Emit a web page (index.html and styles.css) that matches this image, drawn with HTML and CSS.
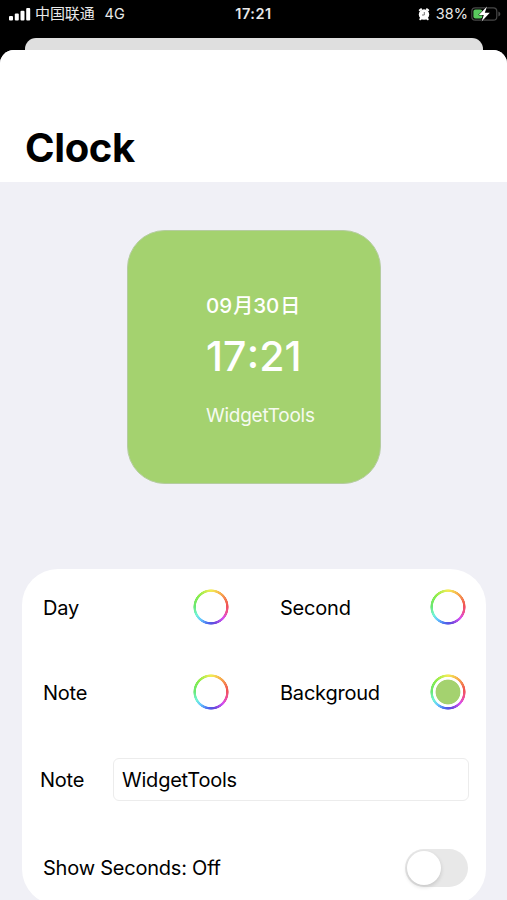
FILE: index.html
```html
<!DOCTYPE html>
<html lang="zh-CN">
<head>
<meta charset="utf-8">
<title>Clock</title>
<link rel="stylesheet" href="styles.css">
</head>
<body>
<header class="status">
  <div class="status-left">
    <svg class="signal" width="22" height="14" viewBox="0 0 22 14" fill="#fff"><rect x="0" y="9" width="4" height="4.5" rx="1"/><rect x="5.8" y="6.5" width="4" height="7" rx="1"/><rect x="11.5" y="3.8" width="4" height="9.7" rx="1"/><rect x="17.2" y="1" width="4" height="12.5" rx="1"/></svg>
    <span class="carrier">中国联通</span>
    <span class="network">4G</span>
  </div>
  <span class="status-time">17:21</span>
  <div class="status-right">
    <svg class="alarm" width="12" height="13" viewBox="0 0 12 13"><path d="M1.8 2.2 3 1.2M10.2 2.2 9 1.2M2.3 11.3l1-1M9.7 11.3l-1-1" stroke="#fff" stroke-width="2" stroke-linecap="round"/><circle cx="6" cy="6.5" r="5.2" fill="#fff"/><path d="M6.3 4v3H4" fill="none" stroke="#777" stroke-width="1"/></svg>
    <span class="percent">38%</span>
    <svg class="battery" width="30" height="16" viewBox="0 0 30 16"><rect x=".8" y="1.8" width="25" height="12.4" rx="3.5" fill="none" stroke="#484848" stroke-width="1.2"/><path d="M27.4 5.5q2 .8 2 2.5t-2 2.5z" fill="#484848"/><rect x="2.4" y="3.4" width="9" height="9.2" rx="2" fill="#59c95e"/><path d="M16 .6 7.8 8.9h5l-2.2 6.7 8.2-8.9h-5z" fill="#fff" stroke="#000" stroke-width="1" paint-order="stroke"/></svg>
  </div>
</header>
<div class="sheet-back"></div>
<main class="sheet">
  <div class="title-bar"><h1>Clock</h1></div>
  <section class="widget">
    <div class="widget-date">09<span class="cjk">月</span>30<span class="cjk">日</span></div>
    <div class="widget-time">17<span class="colon">:</span>21</div>
    <div class="widget-note">WidgetTools</div>
  </section>
  <section class="settings">
    <div class="colors">
      <div class="color-row"><span class="day">Day</span><i class="well"></i></div>
      <div class="color-row"><span class="second">Second</span><i class="well"></i></div>
      <div class="color-row"><span class="note">Note</span><i class="well"></i></div>
      <div class="color-row"><span class="background">Backgroud</span><i class="well well-green"></i></div>
    </div>
    <div class="note-row"><span class="note">Note</span><div class="field"><span>WidgetTools</span></div></div>
    <div class="toggle-row"><span class="show">Show Seconds: Off</span><div class="switch"><i class="knob"></i></div></div>
  </section>
</main>
</body>
</html>
```
FILE: styles.css
```css
* { box-sizing: border-box; }
html, body { height: 100%; }
body {
  margin: 0;
  overflow: hidden;
  background: #000;
  color: #000;
  font-family: Inter, "Noto Sans CJK SC", sans-serif;
  font-size: 20px;
  display: flex;
  flex-direction: column;
}
.status {
  height: 38px;
  flex: none;
  padding: 0 6px 10px 9px;
  display: grid;
  grid-template-columns: 1fr auto 1fr;
  align-items: center;
  color: #e9e9e9;
  font-size: 14.5px;
  line-height: 20px;
}
.status-left, .status-right { display: flex; align-items: center; }
.status-right { justify-content: flex-end; }
.signal { margin-right: 4px; }
.carrier { font-size: 15px; letter-spacing: -0.1px; }
.network { margin-left: 10px; font-size: 14.5px; }
.status-time { font-weight: 600; font-size: 14.5px; letter-spacing: 0.5px; margin-right: 3px; }
.alarm { margin-right: 6px; }
.percent { letter-spacing: 0; margin-right: 3px; }
.sheet-back {
  height: 12px;
  flex: none;
  margin: 0 24px 0 25px;
  background: #dfdfdf;
  border-radius: 11px 11px 0 0;
}
.sheet {
  flex: 1;
  min-height: 0;
  overflow: hidden;
  background: #f0f0f6;
  border-radius: 14px 14px 0 0;
}
.title-bar {
  height: 132px;
  background: #fff;
  display: flex;
  align-items: flex-end;
  padding: 0 25px 10px;
}
h1 {
  margin: 0;
  font-size: 40px;
  line-height: 48px;
  font-weight: 700;
  letter-spacing: -0.4px;
}
.widget {
  width: 254px;
  height: 254px;
  margin: 48px 0 0 127px;
  padding: 61px 0 0 78px;
  border: 1px solid #b5cca0;
  border-radius: 38px;
  background: #a4d26f;
  color: #fff;
  white-space: nowrap;
}
.widget-date { font-size: 20.5px; line-height: 28px; font-weight: 500; }
.cjk { font-size: 20px; margin-left: 1px; }
.widget-time { margin-top: 12px; font-size: 41px; line-height: 48px; font-weight: 500; letter-spacing: 0.1px; }
.colon { display: inline-block; transform: translateY(-3px); }
.widget-note { margin-top: 24px; font-size: 19px; line-height: 24px; letter-spacing: -0.25px; opacity: .9; }
.settings {
  width: 464px;
  height: 336px;
  margin: 85px 0 0 22px;
  border-radius: 36px;
  background: #fff;
  line-height: 28px;
  white-space: nowrap;
  letter-spacing: -0.22px;
}
.colors {
  display: grid;
  grid-template-columns: 186px 186px;
  column-gap: 51px;
  row-gap: 49px;
  padding: 20px 0 0 21px;
}
.color-row { height: 36px; display: flex; align-items: center; justify-content: space-between; }
.color-row span { padding-top: 2px; }
.well {
  width: 36px;
  height: 36px;
  border-radius: 50%;
  background:
    radial-gradient(circle closest-side, #fff 14.8px, transparent 15.4px, transparent 17.3px, #fff 17.9px),
    conic-gradient(#f3ed55, #f7ae4d 10%, #f05352 23%, #ef5090 30%, #d74ff0 37%, #6549dc 47%, #4b68ed 53%, #65c7ff 61%, #72f5d5 67%, #69e76f 76%, #8ced4b 87%, #f3ed55);
}
.well-green {
  background:
    radial-gradient(circle closest-side, #a4d26f 12px, #fff 12.8px, #fff 14.8px, transparent 15.4px, transparent 17.3px, #fff 17.9px),
    conic-gradient(#f3ed55, #f7ae4d 10%, #f05352 23%, #ef5090 30%, #d74ff0 37%, #6549dc 47%, #4b68ed 53%, #65c7ff 61%, #72f5d5 67%, #69e76f 76%, #8ced4b 87%, #f3ed55);
}
.note-row { display: flex; align-items: center; margin: 48px 0 0 18px; }
.note-row .note { width: 73px; }
.field {
  width: 356px;
  height: 43px;
  border: 1px solid #ececec;
  border-radius: 6px;
  display: flex;
  align-items: center;
  padding-left: 8px;
}
.toggle-row { display: flex; align-items: center; justify-content: space-between; margin: 48px 18px 0 21px; }
.switch { width: 63px; height: 38px; border-radius: 19px; background: #e8e8e8; padding: 2px; }
.knob { display: block; width: 34px; height: 34px; border-radius: 50%; background: #fff; box-shadow: 0 2px 4px rgba(0,0,0,.15); }
```
